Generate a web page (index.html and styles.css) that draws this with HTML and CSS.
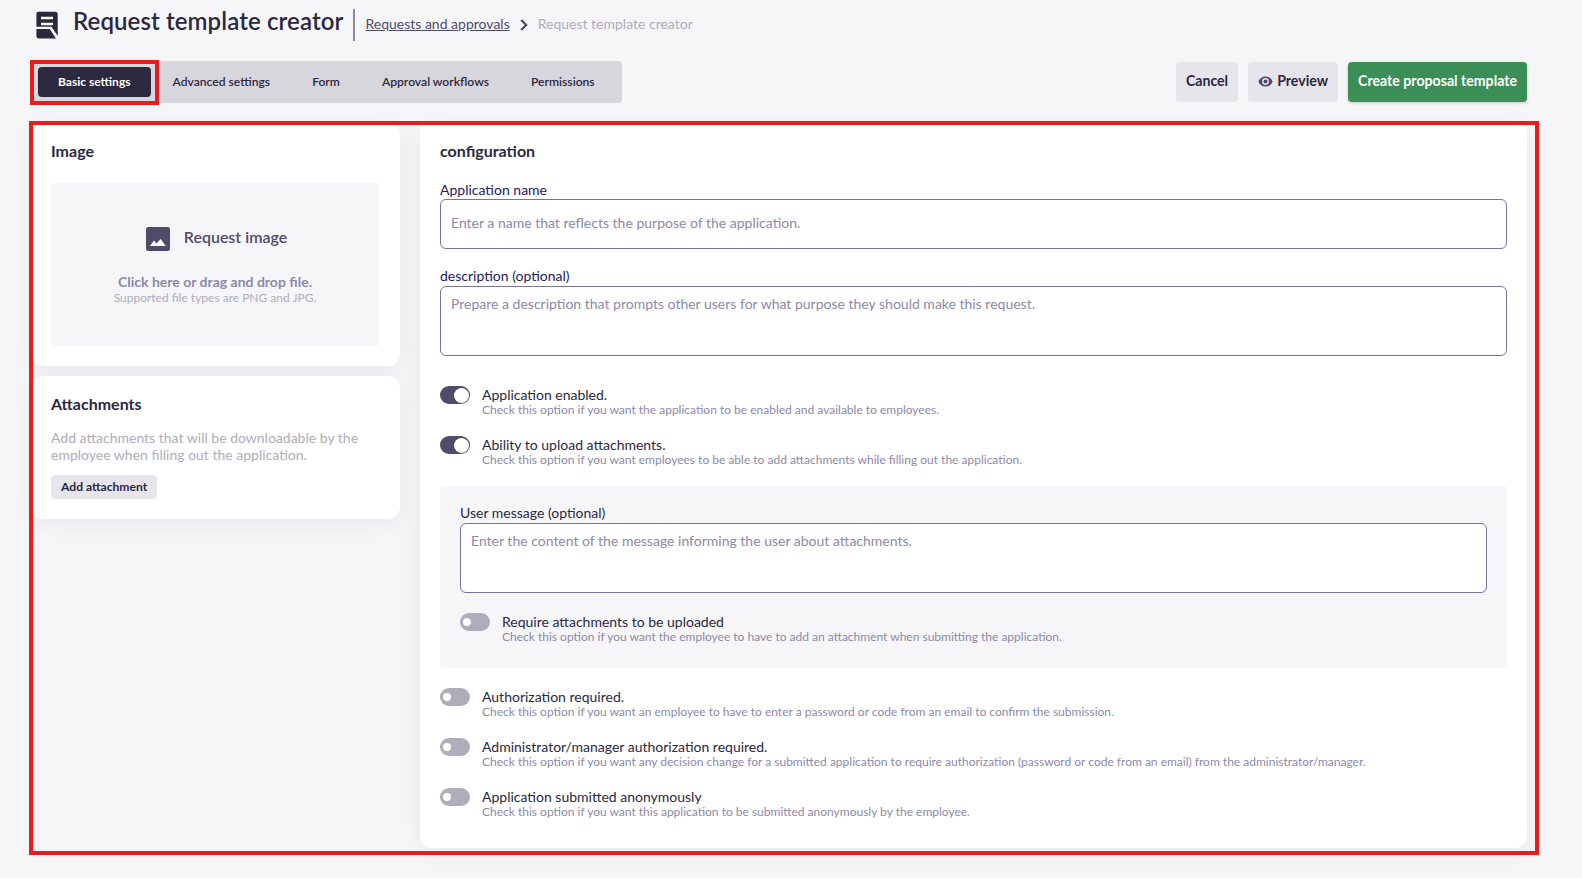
FILE: index.html
```html
<!DOCTYPE html>
<html lang="en">
<head>
    <meta charset="UTF-8">
    <meta name="viewport" content="width=device-width, initial-scale=1.0">
    <title>Request template creator</title>
    <link rel="stylesheet" href="styles.css">
</head>
<body>
    <div class="page">
        <header class="header">
            <svg class="header-icon" width="22" height="28" viewBox="0 0 22 28">
                <path fill="#2b2840" d="M2.5 0.7h17a2.2 2.2 0 0 1 2.2 2.2V25L15.5 15.800H0.400V2.900A2.200 2.200 0 0 1 2.500 0.700z"/>
                <path fill="#2b2840" d="M0.400 18H13.700L20 27.500H2.500A2.200 2.200 0 0 1 0.400 25.300z"/>
                <path stroke="#fff" stroke-width="2.400" d="M5 7h12M5 13h12"/>
            </svg>
            <h1>Request template creator</h1>
            <nav class="breadcrumb">
                <a href="#">Requests and approvals</a>
                <svg width="8" height="12" viewBox="0 0 8 12">
                    <path fill="none" stroke="#4f4b69" stroke-width="2.2" d="M1.200 1l5 5-5 5"/>
                </svg>
                <span>Request template creator</span>
            </nav>
        </header>

        <div class="toolbar">
            <div class="tabs">
                <button class="tab active">Basic settings</button>
                <button class="tab">Advanced settings</button>
                <button class="tab">Form</button>
                <button class="tab">Approval workflows</button>
                <button class="tab">Permissions</button>
                <div class="marker marker-tab"></div>
            </div>
            <div class="actions">
                <button class="btn">Cancel</button>
                <button class="btn">
                    <svg width="15" height="11" viewBox="0 0 15 11">
                        <path fill="#4f4b69" fill-rule="evenodd" d="M7.500 0.500C4.200 0.500 1.500 2.500 0.300 5.500c1.200 3 3.900 5 7.200 5s6-2 7.200-5c-1.200-3-3.900-5-7.200-5zm0 8.400a3.400 3.400 0 1 1 0-6.800 3.400 3.400 0 0 1 0 6.800z"/>
                        <circle cx="7.500" cy="5.500" r="2" fill="#4f4b69"/>
                    </svg>
                    Preview
                </button>
                <button class="btn btn-primary">Create proposal template</button>
            </div>
        </div>

        <main class="content">
            <div class="sidebar">
                <section class="card">
                    <h2>Image</h2>
                    <div class="dropzone">
                        <div class="dropzone-title">
                            <svg width="24" height="24" viewBox="0 0 24 24">
                                <rect width="24" height="24" rx="2.500" fill="#4f4b69"/>
                                <path fill="#fff" d="M4 19l4-5.500 2.500 3 4.200-4.500 5 7z"/>
                            </svg>
                            <span>Request image</span>
                        </div>
                        <p class="dropzone-hint">Click here or drag and drop file.</p>
                        <p class="dropzone-types">Supported file types are PNG and JPG.</p>
                    </div>
                </section>
                <section class="card attachments">
                    <h2>Attachments</h2>
                    <p class="card-text">Add attachments that will be downloadable by the employee when filling out the application.</p>
                    <button class="btn-small">Add attachment</button>
                </section>
            </div>

            <section class="card config">
                <h2>configuration</h2>
                <div class="field">
                    <label for="name">Application name</label>
                    <input id="name" type="text" placeholder="Enter a name that reflects the purpose of the application.">
                </div>
                <div class="field">
                    <label for="description">description (optional)</label>
                    <textarea id="description" placeholder="Prepare a description that prompts other users for what purpose they should make this request."></textarea>
                </div>

                <div class="options">
                    <div class="option">
                        <span class="switch on"></span>
                        <div>
                            <p class="option-title">Application enabled.</p>
                            <p class="option-text">Check this option if you want the application to be enabled and available to employees.</p>
                        </div>
                    </div>
                    <div class="option">
                        <span class="switch on"></span>
                        <div>
                            <p class="option-title">Ability to upload attachments.</p>
                            <p class="option-text">Check this option if you want employees to be able to add attachments while filling out the application.</p>
                        </div>
                    </div>
                </div>

                <div class="nested">
                    <div class="field">
                        <label for="message" class="dark">User message (optional)</label>
                        <textarea id="message" placeholder="Enter the content of the message informing the user about attachments."></textarea>
                    </div>
                    <div class="option">
                        <span class="switch"></span>
                        <div>
                            <p class="option-title">Require attachments to be uploaded</p>
                            <p class="option-text">Check this option if you want the employee to have to add an attachment when submitting the application.</p>
                        </div>
                    </div>
                </div>

                <div class="option">
                    <span class="switch"></span>
                    <div>
                        <p class="option-title">Authorization required.</p>
                        <p class="option-text">Check this option if you want an employee to have to enter a password or code from an email to confirm the submission.</p>
                    </div>
                </div>
                <div class="option">
                    <span class="switch"></span>
                    <div>
                        <p class="option-title">Administrator/manager authorization required.</p>
                        <p class="option-text">Check this option if you want any decision change for a submitted application to require authorization (password or code from an email) from the administrator/manager.</p>
                    </div>
                </div>
                <div class="option">
                    <span class="switch"></span>
                    <div>
                        <p class="option-title">Application submitted anonymously</p>
                        <p class="option-text">Check this option if you want this application to be submitted anonymously by the employee.</p>
                    </div>
                </div>
            </section>
            <div class="marker marker-content"></div>
        </main>
    </div>
</body>
</html>
```
FILE: styles.css
```css
:root {
    --bg: #f6f6f9;
    --dark: #2b2840;
    --purple: #4f4b69;
    --muted: #8d89a6;
    --light: #afacbc;
    --button: #e6e5ec;
    --green: #3b8e56;
    --red: #e81c1c;
}

* {
    box-sizing: border-box;
}

body {
    margin: 0;
    min-height: 100vh;
    background: var(--bg);
    color: var(--dark);
    font-family: Lato, "Open Sans", sans-serif;
    font-size: 14px;
    line-height: 17px;
}

h1, h2, p {
    margin: 0;
}

button, input, textarea {
    font-family: inherit;
    color: inherit;
}

.page {
    width: 1496px;
    margin-left: 31px;
}

/* Header */
.header {
    display: flex;
    align-items: flex-start;
    height: 61px;
    padding-left: 5px;
}

.header-icon {
    margin-top: 11px;
}

h1 {
    margin: 6px 10px 0 15px;
    font-size: 24px;
    line-height: 29px;
    font-weight: 600;
    letter-spacing: 0.1px;
    white-space: nowrap;
}

.breadcrumb {
    display: flex;
    align-items: center;
    gap: 10px;
    height: 32px;
    margin-top: 9px;
    padding: 0 0 3px 10px;
    border-left: 2px solid var(--muted);
    color: var(--light);
}

.breadcrumb a {
    color: var(--purple);
}

.breadcrumb svg {
    margin-top: 2px;
}

/* Tabs and buttons */
.toolbar {
    display: flex;
    justify-content: space-between;
    height: 61px;
}

.tabs {
    position: relative;
    display: flex;
    align-items: center;
    gap: 2px;
    height: 42px;
    padding: 0 7px;
    border-radius: 4px;
    background: #d7d6dd;
}

.tab {
    height: 30px;
    padding: 0 20px 2px;
    border: 0;
    border-radius: 4px;
    background: none;
    font-size: 12.12px;
    font-weight: 600;
}

.tab.active {
    background: var(--dark);
    color: #fff;
    font-size: 12px;
    font-weight: 700;
}

.actions {
    display: flex;
    gap: 10px;
    padding-top: 1px;
}

.btn {
    display: flex;
    align-items: center;
    gap: 4px;
    height: 40px;
    padding: 0 10px 3px;
    border: 0;
    border-radius: 4px;
    background: var(--button);
    font-size: 14.15px;
    font-weight: 700;
}

.btn svg {
    margin-top: 2px;
}

.btn-primary {
    background: var(--green);
    color: #fff;
    box-shadow: 0 1px 3px rgba(0, 0, 0, 0.2);
}

/* Cards */
.content {
    position: relative;
    display: flex;
    align-items: flex-start;
    gap: 20px;
}

.sidebar {
    display: flex;
    flex-direction: column;
    gap: 10px;
    width: 369px;
}

.card {
    padding: 20px;
    border-radius: 12px;
    background: #fff;
    box-shadow: 0 5px 25px rgba(0, 0, 0, 0.06);
}

.card h2 {
    padding-bottom: 2px;
    font-size: 16px;
    line-height: 17px;
    font-weight: 700;
}

.dropzone {
    width: 328px;
    height: 163px;
    margin-top: 22px;
    padding-top: 44px;
    border-radius: 4px;
    background: var(--bg);
    text-align: center;
}

.dropzone-title {
    display: flex;
    justify-content: center;
    gap: 14px;
    padding-left: 3px;
    color: var(--purple);
    font-size: 16px;
    line-height: 20px;
    font-weight: 600;
}

.dropzone-hint {
    margin-top: 22px;
    color: var(--muted);
    font-weight: 700;
}

.dropzone-types {
    margin-top: 1px;
    color: var(--light);
    font-size: 12px;
    line-height: 14px;
}

.attachments {
    padding-top: 19px;
}

.card-text {
    margin-top: 15px;
    color: var(--light);
}

.btn-small {
    display: block;
    height: 24px;
    margin-top: 12px;
    padding: 0 10px 2px;
    border: 0;
    border-radius: 4px;
    background: var(--button);
    font-size: 12.12px;
    font-weight: 700;
}

/* Configuration form */
.config {
    flex: 1;
    height: 726px;
}

.field {
    display: flex;
    flex-direction: column;
    margin-top: 20px;
}

.field + .field {
    margin-top: 18px;
}

.field label {
    color: #24215c;
}

.field .dark {
    color: var(--dark);
}

.field input,
.field textarea {
    display: block;
    width: 100%;
    border: 1px solid #77739a;
    border-radius: 6px;
    background: #fff;
    font-size: 14px;
    line-height: 17px;
    resize: none;
}

.field input {
    height: 50px;
    margin: 1px 0 0;
    padding: 0 10px 3px;
}

.field textarea {
    height: 70px;
    margin: 2px 0 0;
    padding: 8px 10px;
}

.field ::placeholder {
    color: var(--muted);
    opacity: 1;
}

.options {
    margin-top: 30px;
}

.option {
    display: flex;
    gap: 12px;
    height: 50px;
}

.option-text {
    color: var(--muted);
    font-size: 12px;
    line-height: 14px;
}

.switch {
    display: flex;
    align-items: center;
    width: 30px;
    height: 18px;
    padding: 0 3px;
    border-radius: 9px;
    background: var(--light);
}

.switch::before {
    content: "";
    width: 8px;
    height: 8px;
    border-radius: 50%;
    background: #fff;
}

.switch.on {
    justify-content: flex-end;
    padding: 0 1px;
    background: var(--purple);
}

.switch.on::before {
    width: 15px;
    height: 15px;
}

.nested {
    height: 182px;
    margin-bottom: 20px;
    padding: 18px 20px 0;
    border-radius: 4px;
    background: var(--bg);
}

.nested .field {
    margin: 0 0 20px;
}

/* Highlight frames */
.marker {
    position: absolute;
    border: 4px solid var(--red);
    pointer-events: none;
}

.marker-tab {
    top: -1px;
    left: -1px;
    width: 129px;
    height: 45px;
}

.marker-content {
    top: -1px;
    left: -2px;
    width: 1510px;
    height: 734px;
}
```
